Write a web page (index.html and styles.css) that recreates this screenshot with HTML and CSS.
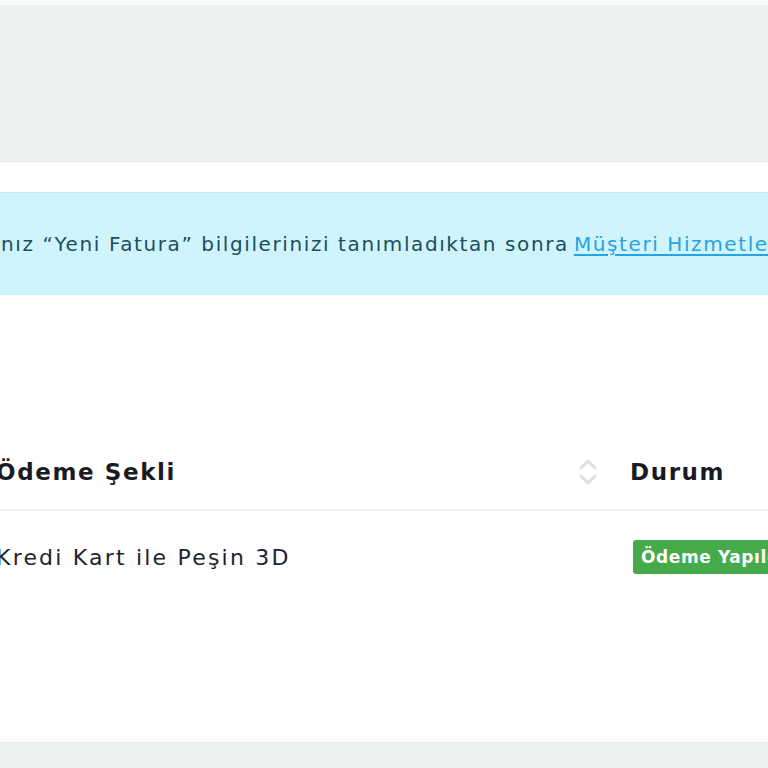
FILE: index.html
```html
<!DOCTYPE html>
<html lang="tr">
<head>
  <meta charset="UTF-8" />
  <meta name="viewport" content="width=device-width, initial-scale=1.0"/>
  <title>Faturalar</title>
  <link rel="stylesheet" href="styles.css">
</head>
<body>

  <div class="top-strip"></div>
  <div class="page-header"></div>

  <div class="content">
    <div class="alert-info">
      nız “Yeni Fatura” bilgilerinizi tanımladıktan sonra <a href="#">Müşteri Hizmetleri</a> ile iletişime geçiniz.
    </div>

    <div class="table">
      <div class="table-head">
        <div class="th th-sort">
          <span>Ödeme Şekli</span>
          <svg class="sort-icon" width="20" height="28" viewBox="0 0 20 28">
            <path d="M3 10 L10 3 L17 10" fill="none" stroke="#dedede" stroke-width="3" stroke-linecap="round" stroke-linejoin="round"/>
            <path d="M3 18 L10 25 L17 18" fill="none" stroke="#dedede" stroke-width="3" stroke-linecap="round" stroke-linejoin="round"/>
          </svg>
        </div>
        <div class="th">Durum</div>
      </div>
      <div class="table-row">
        <div class="td">Kredi Kart ile Peşin 3D</div>
        <div class="td"><span class="badge-success">Ödeme Yapıldı</span></div>
      </div>
    </div>
  </div>

  <div class="page-footer"></div>

</body>
</html>
```

FILE: styles.css
```css
body {
  margin: 0;
  background: #fff;
  font-family: 'DejaVu Sans', 'Noto Sans', sans-serif;
  overflow: hidden;
  height: 768px;
}

.top-strip {
  height: 5px;
  background: #f6fafb;
}

.page-header {
  height: 156px;
  background: #ecf0f0;
  border-bottom: 1px solid #e2e7e7;
}

.content {
  margin-left: -4px;
  width: 1400px;
  padding-top: 30px;
  height: 550px;
}

.alert-info {
  background: #cff4fc;
  border-top: 1px solid #bfeaf3;
  color: #1b4f5c;
  font-size: 20px;
  letter-spacing: 1.6px;
  height: 102px;
  display: flex;
  align-items: center;
  padding-left: 5px;
  white-space: nowrap;
}

.alert-info a {
  color: #25a3e4;
  margin: 0 5px;
  text-decoration: underline;
  text-underline-offset: 3px;
}

.table {
  margin-top: 140px;
}

.table-head,
.table-row {
  display: grid;
  grid-template-columns: 634px 1fr;
}

.table-head {
  border-bottom: 2px solid #eef0f0;
  height: 74px;
  align-items: center;
}

.th {
  font-size: 23px;
  font-weight: 700;
  letter-spacing: 1.6px;
  color: #1a1a22;
}

.th-sort {
  display: flex;
  align-items: center;
  justify-content: space-between;
  padding-right: 32px;
}

.sort-icon {
  display: block;
}

.table-row {
  height: 92px;
  align-items: center;
}

.td {
  font-size: 22px;
  letter-spacing: 2.2px;
  color: #22222e;
}

.badge-success {
  display: inline-block;
  margin-left: 3px;
  background: #46aa4a;
  color: #fff;
  font-size: 17px;
  font-weight: 700;
  letter-spacing: 0.6px;
  padding: 7px 8px;
  border-radius: 3px;
  white-space: nowrap;
}

.page-footer {
  border-top: 1px solid #e4e8e8;
  background: #ecf0f0;
  height: 40px;
}
```
